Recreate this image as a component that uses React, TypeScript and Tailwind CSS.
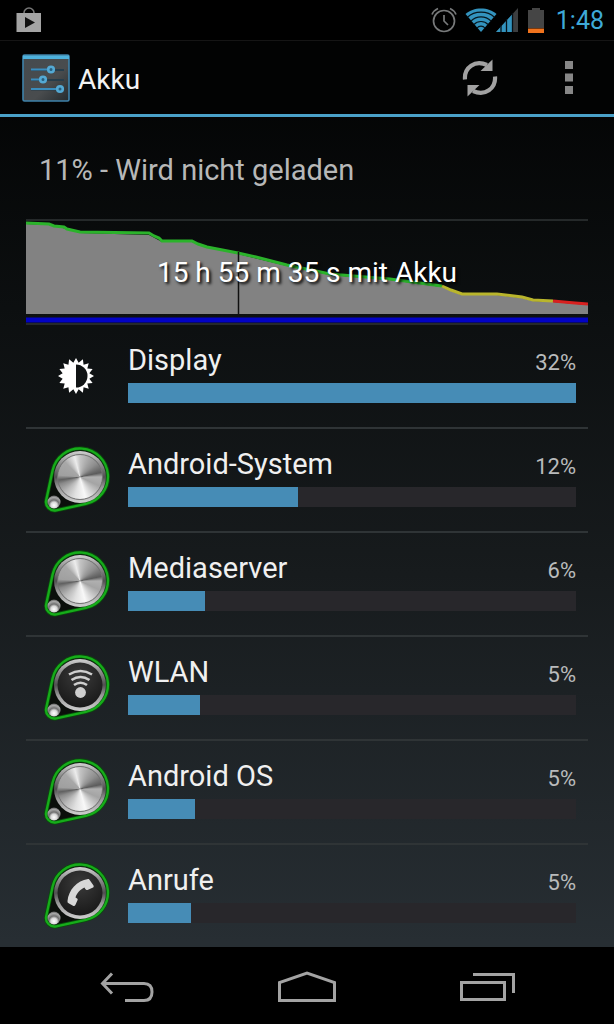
import type { ReactNode } from "react";

type Glyph = "metal" | "wifi" | "phone" | "brightness";

interface Usage {
  name: string;
  percent: number;
  fill: number;
  icon: Glyph;
}

const usages: Usage[] = [
  { name: "Display", percent: 32, fill: 100, icon: "brightness" },
  { name: "Android-System", percent: 12, fill: 38, icon: "metal" },
  { name: "Mediaserver", percent: 6, fill: 17.1, icon: "metal" },
  { name: "WLAN", percent: 5, fill: 16.1, icon: "wifi" },
  { name: "Android OS", percent: 5, fill: 15, icon: "metal" },
  { name: "Anrufe", percent: 5, fill: 14.1, icon: "phone" },
];

function BrightnessIcon() {
  const points = Array.from({ length: 32 }, (_, i) => {
    const r = i % 2 === 0 ? 18 : 13.6;
    const a = (i * Math.PI) / 16;
    return `${(18 + r * Math.sin(a)).toFixed(2)},${(18 - r * Math.cos(a)).toFixed(2)}`;
  }).join(" ");
  return (
    <svg viewBox="0 0 36 36" className="ml-[14px] h-9 w-9" aria-hidden="true">
      <polygon points={points} fill="#fff" />
      <path d="M18 6.5a11.5 11.5 0 0 1 0 23Z" fill="#111415" />
    </svg>
  );
}

function KnobIcon({ glyph }: { glyph: Glyph }) {
  return (
    <div className="relative h-[68px] w-[66px]">
      <svg viewBox="0 0 66 68" className="h-full w-full" aria-hidden="true">
        <defs>
          <linearGradient id={`ring-${glyph}`} x1="0" y1="0" x2="0" y2="1">
            <stop offset="0" stopColor="#d0d0d0" />
            <stop offset="0.25" stopColor="#8c8c8c" />
            <stop offset="0.5" stopColor="#505050" />
            <stop offset="0.7" stopColor="#999" />
            <stop offset="1" stopColor="#cfcfcf" />
          </linearGradient>
          <radialGradient id={`face-${glyph}`} cx="0.5" cy="0.3" r="0.7">
            <stop offset="0" stopColor="#3a3a3a" />
            <stop offset="1" stopColor="#191919" />
          </radialGradient>
          <radialGradient id={`rivet-${glyph}`} cx="0.5" cy="0.75" r="0.8">
            <stop offset="0" stopColor="#fff" />
            <stop offset="0.3" stopColor="#d8d8d8" />
            <stop offset="0.5" stopColor="#707070" />
            <stop offset="0.75" stopColor="#a8a8a8" />
            <stop offset="1" stopColor="#444" />
          </radialGradient>
        </defs>
        <path
          d="M2.2 54.2 8.6 24.6A28 28 0 1 1 41.9 57.9L12.3 64.3A8.5 8.5 0 0 1 2.2 54.2Z"
          fill="#0b0f0b"
          stroke="#0a4d0c"
          strokeWidth="4"
        />
        <path
          d="M2.2 54.2 8.6 24.6A28 28 0 1 1 41.9 57.9L12.3 64.3A8.5 8.5 0 0 1 2.2 54.2Z"
          fill="none"
          stroke="#16ac1a"
          strokeWidth="2.4"
        />
        <circle cx="36" cy="31" r="26" fill={`url(#ring-${glyph})`} />
        <circle cx="36" cy="31" r="22.500" fill={`url(#face-${glyph})`} />
        <circle cx="10" cy="56" r="6.500" fill={`url(#rivet-${glyph})`} />
        {glyph === "wifi" && (
          <g fill="none" stroke="#cfcfcf" strokeWidth="2.6">
            <path d="M25 20.500Q36.500 13.500 48 20.500" />
            <path d="M27.500 26Q36.500 20 45.500 26" />
            <path d="M30 31Q36.500 26.500 43 31" />
            <circle cx="36.500" cy="38.500" r="5.400" fill="#cfcfcf" stroke="none" />
          </g>
        )}
        {glyph === "phone" && (
          <path
            d="M23.500 39C24.500 28 33 18.500 44 17C45 16.900 45.500 17.500 46 18.500L49.500 23.500C50 24.500 49.500 25.500 48.500 25.800L43.500 28C42.500 28.300 41.500 27.500 40.500 25.500C36.500 27 32.500 31.500 31.500 35.500C33.500 36.500 34 37.200 33.600 38L31.500 42.800C31 44 30 44.300 29 43.800L25 41.500C24 41 23.400 40.500 23.500 39Z"
            fill="#d8d8d8"
          />
        )}
      </svg>
      {glyph === "metal" && (
        <div className="absolute top-[8px] left-[13px] h-[46px] w-[46px] rounded-full border border-[#777] bg-[conic-gradient(#c4c4c4_0deg,#a8a8a8_25deg,#8e8e8e_50deg,#5c5c5c_78deg,#b0b0b0_90deg,#a4a4a4_115deg,#cccccc_140deg,#f8f8f8_165deg,#e0e0e0_195deg,#b8b8b8_225deg,#8a8a8a_250deg,#606060_262deg,#a0a0a0_275deg,#a8a8a8_315deg,#ececec_345deg,#c4c4c4_360deg)]" />
      )}
    </div>
  );
}

function UsageRow({ item }: { item: Usage }) {
  const id = `usage-${item.name.replace(" ", "-")}`;
  return (
    <li className="flex items-start border-b-2 border-[#2f3436] pr-3 last:border-b-0">
      <div className="flex h-[102px] w-[102px] shrink-0 items-center pl-[18px]">
        {item.icon === "brightness" ? <BrightnessIcon /> : <KnobIcon glyph={item.icon} />}
      </div>
      <div className="flex min-w-0 flex-1 flex-col gap-[5px] pt-[17px]">
        <div className="flex h-9 items-baseline justify-between">
          <span id={id} className="text-[29px] leading-9 text-[#f0f0f0]">
            {item.name}
          </span>
          <span className="text-[22px] leading-8 text-[#b9bbbc]">{item.percent}%</span>
        </div>
        <div
          role="meter"
          aria-labelledby={id}
          aria-valuenow={item.percent}
          aria-valuemin={0}
          aria-valuemax={100}
          className="h-5 bg-[#28272b]"
        >
          <div className="h-full bg-[#468cb6]" style={{ width: `${item.fill}%` }} />
        </div>
      </div>
    </li>
  );
}

function BatteryChart() {
  return (
    <section className="relative h-[106px] border-y-2 border-[#25292a]">
      <svg viewBox="0 0 562 102" preserveAspectRatio="none" className="h-full w-full" aria-hidden="true">
        <path
          d="M0 3 23 4 41 8 54 12 123 14 136 21 166 21 181 26 212 33 261 45 304 54 364 59 416 66 425 70 436 74 471 74 496 77 507 80 527 81 562 84V93H0Z"
          fill="#828282"
        />
        <g fill="none" strokeWidth="3">
          <path
            d="M0 2 23 3 28 5 38 6 41 8 54 11 123 12 128 15 133 17 136 20 166 20 172 23 181 26 212 32 230 36 261 44 304 53 364 58 416 65"
            stroke="#2bb32b"
          />
          <path d="M416 65 425 69 436 73 471 73 496 76 507 79 527 80" stroke="#b9b52c" />
          <path d="M527 80 549 82 562 83" stroke="#d8201f" />
        </g>
        <path d="M212.500 31V97" stroke="#101010" strokeWidth="1.500" />
        <path d="M0 99H562" stroke="#0202c4" strokeWidth="5" />
      </svg>
      <p className="absolute inset-0 flex items-center justify-center pt-[2px] text-[28px] text-white [text-shadow:2px_2px_3px_#000]">
        15 h 55 m 35 s mit Akku
      </p>
    </section>
  );
}

function StatusBar() {
  return (
    <div className="flex h-10 items-center justify-between bg-black pr-[10px] pl-4">
      <svg viewBox="0 0 26 26" className="h-[26px] w-[26px]" aria-hidden="true">
        <path d="M8 6a5 5 0 0 1 10 0" fill="none" stroke="#777" strokeWidth="1.600" />
        <path d="M0.500 6H25V25H0.500Z" fill="#a4a4a4" />
        <path d="M9 10 19 15.500 9 21Z" fill="#111" />
      </svg>
      <div className="flex items-center">
        <svg viewBox="0 0 26 26" className="h-[26px] w-[26px]" fill="none" stroke="#77797a" strokeWidth="1.700" aria-hidden="true">
          <circle cx="13" cy="14" r="10.500" />
          <path d="M13 8V14L17 18M1 7.500Q2.500 3.500 7 1.500M25 7.500Q23.500 3.500 19 1.500" />
        </svg>
        <svg viewBox="0 0 32 24" className="ml-2 h-6 w-8" aria-hidden="true">
          <path d="M0.500 6C8 -1.500 24 -1.500 31.500 6L16 24Z" fill="#3393be" />
          <path d="M2.500 9.300C9.500 2.500 22.500 2.500 29.500 9.300M6 13C11.500 7.500 20.500 7.500 26 13M9 16.500C12.500 12.500 19.500 12.500 23 16.500M12 20C14 17.500 18 17.500 20 20" fill="none" stroke="#06151c" strokeWidth="1.200" />
        </svg>
        <svg viewBox="0 0 22 24" className="-ml-px h-6 w-[22px]" aria-hidden="true">
          <path d="M0 24 22 0V24Z" fill="#3c3e40" />
          <path d="M0 24 16.500 6V24Z" fill="#3393be" />
          <path d="M5 17V24M10.500 11V24M16.500 5V24" stroke="#061017" strokeWidth="1.300" />
        </svg>
        <svg viewBox="0 0 16 25" className="ml-[10px] h-[25px] w-4" aria-hidden="true">
          <path d="M4 0H12V2H16V20H0V2H4Z" fill="#454545" />
          <path d="M0 20.500H16V25H0Z" fill="#f0731d" />
        </svg>
        <time className="ml-3 pt-0.5 text-[25px] leading-[38px] text-[#3ea9d8]">1:48</time>
      </div>
    </div>
  );
}

function SettingsIcon() {
  return (
    <svg viewBox="0 0 48 48" className="h-12 w-12" aria-hidden="true">
      <defs>
        <linearGradient id="panel" x1="0" y1="0" x2="1" y2="1">
          <stop offset="0" stopColor="#454b4e" />
          <stop offset="0.6" stopColor="#494c4e" />
          <stop offset="1" stopColor="#252b2e" />
        </linearGradient>
      </defs>
      <rect x="1" y="1" width="46" height="46" rx="1.500" fill="url(#panel)" stroke="#3f83ab" strokeWidth="1.600" />
      <path d="M1 1.500H47V5H1Z" fill="#4db1dc" />
      <path d="M9 16H42M9 26H42M9 35.500H42" stroke="#263d4b" strokeWidth="1.800" />
      <path d="M9 15.500H26M9 25.500H18M9 35H35" stroke="#3a8dbd" strokeWidth="1.800" />
      <g fill="#275d7c" stroke="#53a9d4" strokeWidth="2.600">
        <circle cx="29" cy="15.500" r="2.800" />
        <circle cx="21" cy="25.500" r="2.800" />
        <circle cx="38" cy="35" r="2.800" />
      </g>
    </svg>
  );
}

function IconButton({ label, children }: { label: string; children: ReactNode }) {
  return (
    <button type="button" aria-label={label} className="flex h-16 w-16 items-center justify-center">
      {children}
    </button>
  );
}

export default function App() {
  return (
    <div className="flex min-h-screen flex-col bg-[linear-gradient(#000000,#0c0f10_30%,#171b1d_56%,#272e33_92%)] font-[Roboto,sans-serif]">
      <StatusBar />
      <header className="flex h-[77px] items-center justify-between border-t border-b-[3px] border-t-[#151515] border-b-[#4aa1c8] bg-[#020303] pl-[22px]">
        <div className="flex items-center gap-2">
          <SettingsIcon />
          <h1 className="pt-1 text-[28px] leading-9 text-[#f3f3f3]">Akku</h1>
        </div>
        <div className="flex items-center gap-[25px] pr-[13px]">
          <IconButton label="Aktualisieren">
            <svg viewBox="0 0 36 38" className="h-[38px] w-9" aria-hidden="true">
              <g id="arrow">
                <path d="M3 20.500C2 8.500 13 0.500 25 6" fill="none" stroke="#a2a2a2" strokeWidth="4.200" />
                <path d="M30.500 0.500V12H18.500Z" fill="#a2a2a2" />
              </g>
              <use href="#arrow" transform="rotate(180 18 19)" />
            </svg>
          </IconButton>
          <IconButton label="Weitere Optionen">
            <svg viewBox="0 0 8 33" className="h-[33px] w-2" fill="#878787" aria-hidden="true">
              <path d="M0 0H8V8H0ZM0 12.500H8V20.500H0ZM0 25H8V33H0Z" />
            </svg>
          </IconButton>
        </div>
      </header>
      <main className="flex-1 px-[26px]">
        <h2 className="px-[13px] pt-[35px] pb-[31px] text-[29px] leading-9 text-[#b7b8b8]">11% - Wird nicht geladen</h2>
        <BatteryChart />
        <ul>
          {usages.map((item) => (
            <UsageRow key={item.name} item={item} />
          ))}
        </ul>
      </main>
      <nav className="flex h-[77px] items-center justify-center gap-[116px] bg-black pt-[2px]" aria-label="Systemnavigation">
        <IconButton label="Zurück">
          <svg viewBox="0 0 54 30" className="h-[30px] w-[54px] shrink-0" fill="none" stroke="#a3a3a3" strokeWidth="3" aria-hidden="true">
            <path d="M12 1.500 2.500 11.500 12 21.500M3 11.500H44Q52 11.500 52 20T44 28.500H25" />
          </svg>
        </IconButton>
        <IconButton label="Startseite">
          <svg viewBox="0 0 58 32" className="h-8 w-[58px] shrink-0" fill="none" stroke="#a3a3a3" strokeWidth="3" aria-hidden="true">
            <path d="M1.500 29.500V11.500L29 2 56.500 11.500V29.500Z" />
          </svg>
        </IconButton>
        <IconButton label="Letzte Apps">
          <svg viewBox="0 0 56 30" className="h-[30px] w-14 shrink-0" fill="none" stroke="#a3a3a3" strokeWidth="3" aria-hidden="true">
            <path d="M2.500 10.500H45.500V27.500H2.500ZM14 2.500H54.500V21" />
          </svg>
        </IconButton>
      </nav>
    </div>
  );
}
